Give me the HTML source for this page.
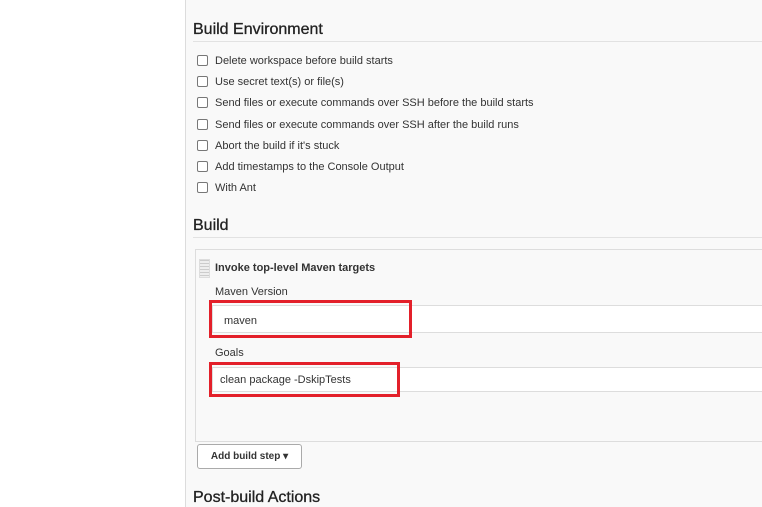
<!DOCTYPE html>
<html><head><style>
body{margin:0;width:762px;height:507px;overflow:hidden;background:#fff;font-family:"Liberation Sans",sans-serif;position:relative;color:#333}
.panel{position:absolute;left:185px;top:0;width:577px;height:507px;background:#f9f9f9;border-left:1px solid #dcdcdc}
.a{position:absolute}
h2{position:absolute;margin:0;font-weight:normal;font-size:16px;color:#222;-webkit-text-stroke:0.3px #222}
.hr{position:absolute;left:193px;right:0;height:1px;background:#e2e2e2}
.cb{position:absolute;left:197px;width:9px;height:9px;border:1px solid #777;border-radius:2px;background:#fff}
.lb{position:absolute;left:215px;font-size:11px;color:#333}
.red{position:absolute;border:3px solid #e3202a}
.inp{position:absolute;background:#fff;border:1px solid #ddd;border-right:none}
</style></head><body>
<div class="panel"></div>
<h2 style="left:193px;top:21px">Build Environment</h2>
<div class="hr" style="top:41px"></div>
<div class="cb" style="top:55px"></div><div class="lb" style="top:55px">Delete workspace before build starts</div>
<div class="cb" style="top:76px"></div><div class="lb" style="top:76px">Use secret text(s) or file(s)</div>
<div class="cb" style="top:97px"></div><div class="lb" style="top:97px">Send files or execute commands over SSH before the build starts</div>
<div class="cb" style="top:119px"></div><div class="lb" style="top:119px">Send files or execute commands over SSH after the build runs</div>
<div class="cb" style="top:140px"></div><div class="lb" style="top:140px">Abort the build if it's stuck</div>
<div class="cb" style="top:161px"></div><div class="lb" style="top:161px">Add timestamps to the Console Output</div>
<div class="cb" style="top:182px"></div><div class="lb" style="top:182px">With Ant</div>
<h2 style="left:193px;top:217px">Build</h2>
<div class="hr" style="top:237px"></div>
<div class="a" style="left:195px;top:249px;width:567px;height:191px;border:1px solid #ddd;border-right:none;background:#f9f9f9"></div>
<div class="a" style="left:199px;top:259px;width:9px;height:17px;background:repeating-linear-gradient(#ccc 0 1px,#eee 1px 3px);border:1px solid #ddd"></div>
<div class="lb" style="top:262px;font-weight:bold">Invoke top-level Maven targets</div>
<div class="lb" style="top:286px">Maven Version</div>
<div class="inp" style="left:212px;top:305px;width:550px;height:26px"></div>
<div class="lb" style="left:224px;top:315px">maven</div>
<div class="red" style="left:209px;top:300px;width:197px;height:32px"></div>
<div class="lb" style="top:347px">Goals</div>
<div class="inp" style="left:212px;top:367px;width:550px;height:23px"></div>
<div class="lb" style="left:220px;top:374px">clean package -DskipTests</div>
<div class="red" style="left:209px;top:362px;width:185px;height:29px"></div>
<div class="a" style="left:197px;top:444px;width:103px;height:23px;border:1px solid #aaa;border-radius:3px;background:#fff;font-size:10px;font-weight:bold;line-height:23px;text-align:center;color:#333">Add build step &#9662;</div>
<h2 style="left:193px;top:489px">Post-build Actions</h2>
</body></html>
